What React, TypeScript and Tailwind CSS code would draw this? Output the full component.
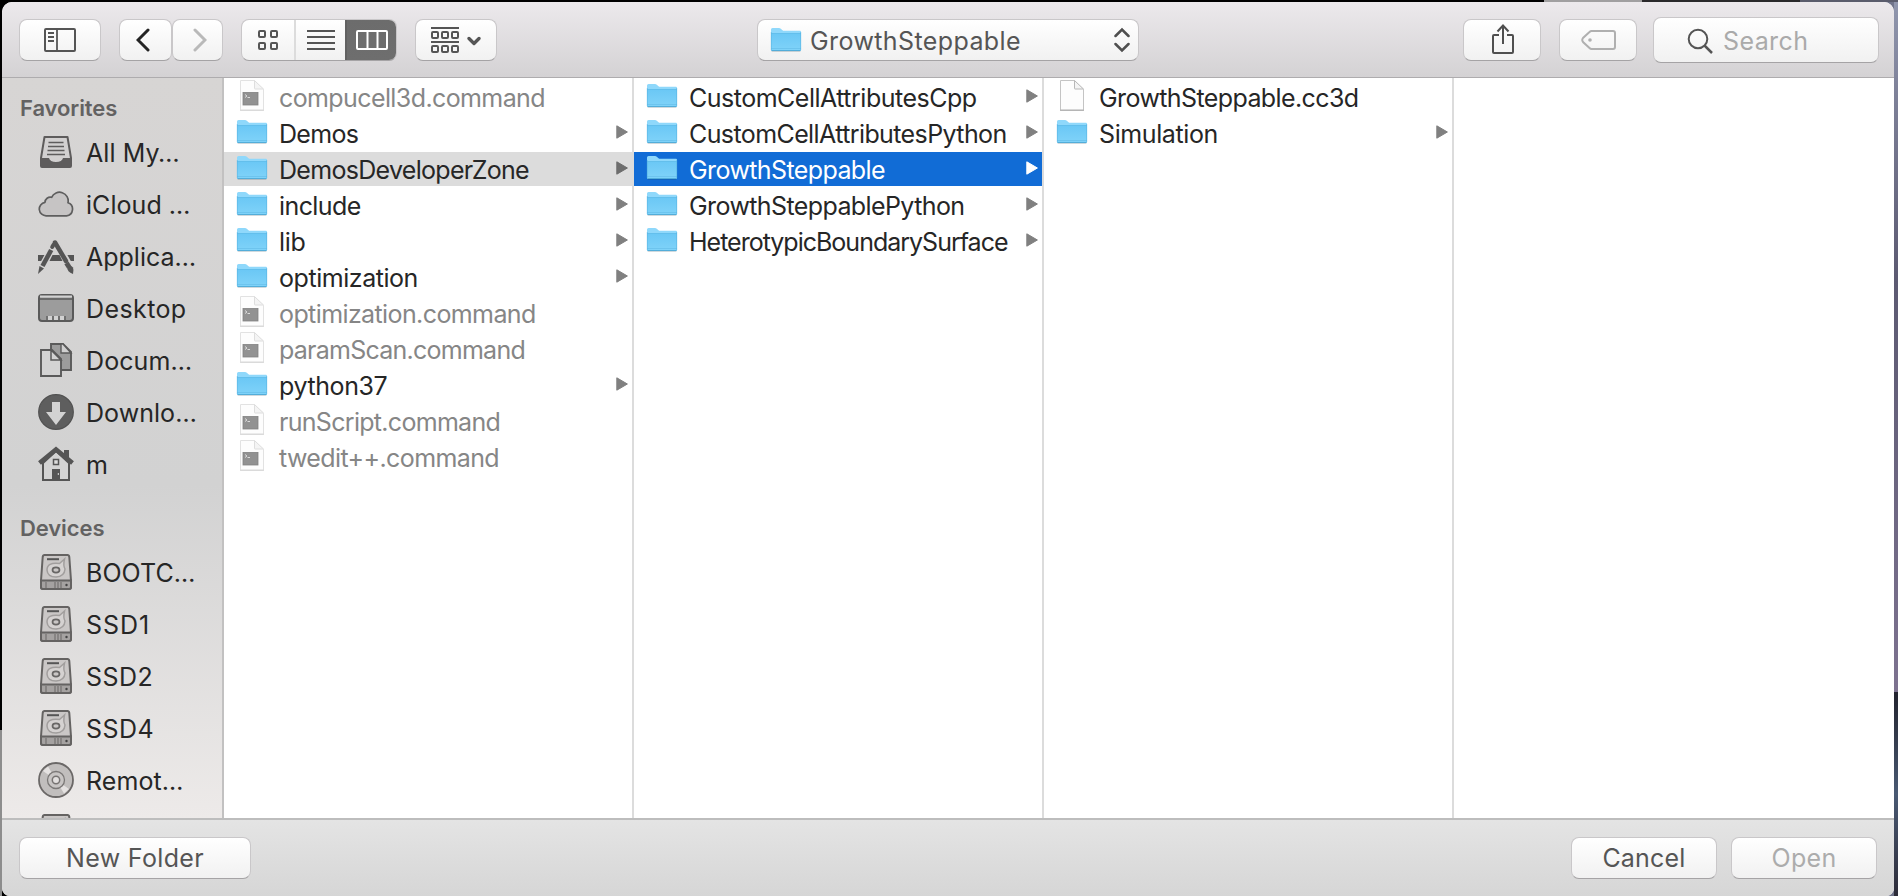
import type { ReactNode } from "react";

type Entry = {
  name: string;
  kind: "folder" | "command" | "file";
  state?: "trail" | "selected";
  tracking?: string;
};

const columns: Entry[][] = [
  [
    { name: "compucell3d.command", kind: "command" },
    { name: "Demos", kind: "folder", tracking: "tracking-[-0.7px]" },
    { name: "DemosDeveloperZone", kind: "folder", state: "trail", tracking: "tracking-[-0.7px]" },
    { name: "include", kind: "folder" },
    { name: "lib", kind: "folder", tracking: "tracking-[-0.3px]" },
    { name: "optimization", kind: "folder", tracking: "tracking-[-0.45px]" },
    { name: "optimization.command", kind: "command" },
    { name: "paramScan.command", kind: "command", tracking: "tracking-[-0.75px]" },
    { name: "python37", kind: "folder", tracking: "tracking-[-0.4px]" },
    { name: "runScript.command", kind: "command", tracking: "tracking-[-0.7px]" },
    { name: "twedit++.command", kind: "command" },
  ],
  [
    { name: "CustomCellAttributesCpp", kind: "folder", tracking: "tracking-[-0.5px]" },
    { name: "CustomCellAttributesPython", kind: "folder" },
    { name: "GrowthSteppable", kind: "folder", state: "selected" },
    { name: "GrowthSteppablePython", kind: "folder" },
    { name: "HeterotypicBoundarySurface", kind: "folder", tracking: "tracking-[-1px]" },
  ],
  [
    { name: "GrowthSteppable.cc3d", kind: "file" },
    { name: "Simulation", kind: "folder", tracking: "tracking-[-0.4px]" },
  ],
];

function FolderIcon() {
  return (
    <svg width="32" height="28" viewBox="0 0 32 28" className="block shrink-0">
      <defs>
        <linearGradient id="folderFront" x1="0" y1="0" x2="0" y2="1">
          <stop offset="0" stopColor="#6ac7f5" />
          <stop offset="1" stopColor="#80d3f9" />
        </linearGradient>
      </defs>
      <rect x="1.5" y="25" width="29" height="2" rx="1" fill="#000" opacity="0.13" />
      <path d="M1 4.500Q1 3 2.500 3H9Q10 3 10.800 3.700L12.500 5.200Q13.200 5.800 14.200 5.800H30Q31 5.800 31 7V25H1Z" fill="#8fd8fb" />
      <path d="M1 8H31V25Q31 26 30 26H2Q1 26 1 25Z" fill="url(#folderFront)" />
      <path d="M1 8.500H31M1 23.500H31" stroke="#5db8e4" strokeWidth="0.7" opacity="0.7" />
      <path d="M1.500 25.600H30.500" stroke="#4fa9d6" strokeWidth="1" />
      <path d="M1.300 7V25M30.700 7V25" stroke="#58b3e0" strokeWidth="0.6" />
    </svg>
  );
}

function PageIcon({ terminal }: { terminal: boolean }) {
  return (
    <svg width="32" height="34" viewBox="0 0 32 34" className="block shrink-0">
      <path d="M4.500 2.500H18.500L27.500 11.500V32H4.500Z" fill="#fdfdfd" stroke={terminal ? "#e2e2e2" : "#c4c4c4"} strokeWidth="1" />
      <path d="M4 32.300H28" stroke={terminal ? "#d5d5d5" : "#aaa"} strokeWidth="1" />
      <path d="M18.500 2.500V10.500Q18.500 11 19 11H27.500Z" fill="#f4f4f4" stroke={terminal ? "#dedede" : "#b8b8b8"} strokeWidth="1" />
      {terminal && (
        <>
          <rect x="7" y="14.500" width="15" height="12.500" fill="#929292" stroke="#828282" strokeWidth="0.8" />
          <path d="M9 16.500L11 18L9 19.500M11.500 19.500H14" stroke="#e3e3e3" strokeWidth="0.9" fill="none" />
        </>
      )}
    </svg>
  );
}

function Row({ entry }: { entry: Entry }) {
  const tone =
    entry.state === "selected"
      ? "bg-[#116cd6] text-white"
      : entry.state === "trail"
        ? "bg-[#dcdcdc] text-[#262626]"
        : entry.kind === "command"
          ? "text-[#868686]"
          : "text-[#262626]";
  const arrow = entry.state === "selected" ? "#ffffff" : entry.state === "trail" ? "#6d6d6d" : "#808080";
  return (
    <div className={`mb-0.5 flex h-[34px] items-center pr-1 pl-3 ${tone}`}>
      <div className="-mt-1 flex h-[34px] w-8 items-center">
        {entry.kind === "folder" ? <FolderIcon /> : <PageIcon terminal={entry.kind === "command"} />}
      </div>
      <span
        className={`ml-[11px] w-0 grow pt-px text-[25px] leading-[34px] font-[430] whitespace-nowrap ${entry.tracking ?? "tracking-[-0.6px]"}`}
      >
        {entry.name}
      </span>
      {entry.kind === "folder" && (
        <svg width="12" height="14" viewBox="0 0 12 14" className="-mt-[3px] shrink-0">
          <path d="M0.800 0.800L11.400 7L0.800 13.200Z" fill={arrow} stroke={arrow} strokeWidth="1" strokeLinejoin="round" />
        </svg>
      )}
    </div>
  );
}

function Button({ className, children }: { className: string; children: ReactNode }) {
  return (
    <div
      className={`flex shrink-0 items-center justify-center rounded-[8px] border border-[#c9c7c9] border-b-[#a5a3a5] bg-linear-to-b from-white to-[#f1f1f1] ${className}`}
    >
      {children}
    </div>
  );
}

const AllFiles = () => (
  <>
    <path d="M6.500 3H29.500L33 24V32Q33 33 32 33H4Q3 33 3 32V24Z" fill="#d2d0d0" stroke="#5e5c5c" strokeWidth="2" strokeLinejoin="round" />
    <path d="M3 24H11Q12 28 18 28Q24 28 25 24H33V32Q33 33 32 33H4Q3 33 3 32Z" fill="#5e5c5c" />
    <path d="M10.500 8.500H25.500M10 12.500H26M9.500 16.500H26.500M9 20.500H27" stroke="#5e5c5c" strokeWidth="1.700" />
  </>
);
const Cloud = () => (
  <path d="M8.500 29.800A6.800 6.800 0 0 1 7 16.300A5.300 5.300 0 0 1 13.600 11.300A8.700 8.700 0 0 1 30 16.800A6.700 6.700 0 0 1 28.500 29.800Z" fill="#c6c4c4" stroke="#5e5e5e" strokeWidth="1.700" strokeLinejoin="round" />
);
const Apps = () => (
  <g>
    <path d="M0 17H36V23H0Z" fill="#555" />
    <path d="M17.500 5L5 28M18 5L31 28" stroke="#d4d3d3" strokeWidth="8" />
    <path d="M14.500 17H21.500L24.500 23H11.500Z" fill="#555" />
    <path d="M17 4.500L28 23" stroke="#555" strokeWidth="4.500" strokeLinecap="round" />
    <path d="M28.500 25L31 29" stroke="#555" strokeWidth="5" />
    <path d="M29 29Q32 26 35 29.500Q36 32 35 36Q29 34 29 29Z" fill="#555" />
    <path d="M14.200 9L15.500 6.800" stroke="#555" strokeWidth="4" strokeLinecap="round" />
    <path d="M13.200 12L4.500 28" stroke="#555" strokeWidth="4.600" />
    <path d="M1.500 28L6 30.500L0 36Z" fill="#555" />
  </g>
);
const Desktop = () => (
  <>
    <rect x="1" y="5" width="34" height="26" rx="3" fill="#9c9c9c" stroke="#5a5a5a" strokeWidth="2" />
    <path d="M2 6.500H34" stroke="#d2d2d2" strokeWidth="2" />
    <path d="M1 9H35" stroke="#5a5a5a" strokeWidth="1.700" />
    <path d="M8 26H28V30H8Z" fill="#707070" />
    <path d="M10 26H14V30H10ZM16 26H20V30H16ZM22 26H26V30H22Z" fill="#d2d2d2" />
  </>
);
const Docs = () => (
  <g strokeWidth="1.900" stroke="#5a5a5a">
    <path d="M13 2H25L33 10V28H13Z" fill="#9c9c9c" />
    <path d="M23 2V11H33L25 2Z" fill="#d0d0d0" strokeWidth="1.400" />
    <path d="M3 8H14L23 17V34H3Z" fill="#d3d3d3" />
    <path d="M13 8V18H23Z" fill="#d3d3d3" strokeWidth="1.500" />
  </g>
);
const Down = () => (
  <>
    <circle cx="18" cy="18" r="17.300" fill="#5e5e5e" stroke="#515151" strokeWidth="1.200" />
    <path d="M14 8H22V18H28L18 31L8 18H14Z" fill="#d3d3d3" />
  </>
);
const Home = () => (
  <>
    <path d="M5 17L18 5L31 17V34H5Z" fill="#d3d3d3" stroke="#555" strokeWidth="2" />
    <path d="M26 4H31V12L26 8Z" fill="#555" />
    <path d="M1.500 17L18 3.500L34.500 17" stroke="#555" strokeWidth="4.500" fill="none" />
    <path d="M15.500 13.500H20.500V18.500H15.500Z" fill="#ddd" stroke="#555" strokeWidth="1.500" />
    <path d="M14 23H22V34H14Z" fill="#555" />
    <path d="M20.300 27V29" stroke="#ddd" strokeWidth="1" />
  </>
);
const Drive = () => (
  <>
    <path d="M6.500 1H29.500Q31 1 31.300 3L33 26.500V33Q33 35 31 35H5Q3 35 3 33V26.500L4.700 3Q5 1 6.500 1Z" fill="#cac7c6" stroke="#656362" strokeWidth="2" />
    <path d="M3 26.500H33V33Q33 35 31 35H5Q3 35 3 33Z" fill="#a5a2a1" stroke="#656362" strokeWidth="2" />
    <path d="M9 5.200H21" stroke="#555" strokeWidth="2" />
    <path d="M26.500 5L21.500 9.500Q9 8 9 16Q9.500 23 18 23Q26.500 22.500 27 15Q25 11.500 26.500 5Z" fill="#d5d2d1" stroke="#a19e9d" strokeWidth="1.500" />
    <ellipse cx="18" cy="16" rx="3.500" ry="2.600" fill="#c9c6c5" stroke="#686665" strokeWidth="1.700" />
    <path d="M8 28V34M17 28V34M20 28V34M23 28V34" stroke="#777574" strokeWidth="1.300" />
    <circle cx="28.500" cy="31" r="1.200" fill="#444" />
  </>
);
const Disc = () => (
  <>
    <circle cx="18" cy="18" r="17" fill="#c1bebd" stroke="#6b6867" strokeWidth="1.800" />
    <path d="M18 18L5 9L10 4.500ZM18 18L31 27L26 31.500Z" fill="#e5e2e1" />
    <circle cx="18" cy="18" r="8.500" fill="#c8c5c4" stroke="#7b7877" strokeWidth="1.300" />
    <circle cx="18" cy="18" r="3.700" fill="#e2dfde" stroke="#777473" strokeWidth="1.500" />
  </>
);

type Place = { label: string; Glyph: () => ReactNode; tracking: string };

const favorites: Place[] = [
  { label: "All My…", Glyph: AllFiles, tracking: "tracking-[0.1px]" },
  { label: "iCloud …", Glyph: Cloud, tracking: "tracking-[0.05px]" },
  { label: "Applica…", Glyph: Apps, tracking: "tracking-[0px]" },
  { label: "Desktop", Glyph: Desktop, tracking: "tracking-[0.4px]" },
  { label: "Docum…", Glyph: Docs, tracking: "tracking-[0.1px]" },
  { label: "Downlo…", Glyph: Down, tracking: "tracking-[0.05px]" },
  { label: "m", Glyph: Home, tracking: "tracking-[0px]" },
];
const devices: Place[] = [
  { label: "BOOTC…", Glyph: Drive, tracking: "tracking-[0.05px]" },
  { label: "SSD1", Glyph: Drive, tracking: "tracking-[1px]" },
  { label: "SSD2", Glyph: Drive, tracking: "tracking-[0.5px]" },
  { label: "SSD4", Glyph: Drive, tracking: "tracking-[0.5px]" },
  { label: "Remot…", Glyph: Disc, tracking: "tracking-[0.1px]" },
  { label: "", Glyph: Drive, tracking: "tracking-[0px]" },
];

function SidebarList({ items }: { items: Place[] }) {
  return (
    <>
      {items.map(({ label, Glyph, tracking }, i) => (
        <div key={i} className="flex h-[52px] shrink-0 items-center pl-9">
          <svg width="36" height="36" viewBox="0 0 36 36" className="shrink-0">
            <Glyph />
          </svg>
          <span className={`ml-3 pt-0.5 text-[25px] leading-[50px] font-[430] whitespace-nowrap text-[#262626] ${tracking}`}>
            {label}
          </span>
        </div>
      ))}
    </>
  );
}

export default function App() {
  return (
    <div className="flex h-[896px] w-[1898px] flex-col overflow-hidden bg-black font-['Inter','Liberation_Sans',sans-serif]">
      <div className="flex h-0.5 shrink-0">
        <div className="w-[1544px] bg-black" />
        <div className="w-[98px] bg-[#a09fa0]" />
        <div className="w-[158px] bg-[#2a292b]" />
        <div className="grow bg-[#5a5c6c]" />
      </div>
      <div className="flex h-[894px] bg-linear-to-r from-black from-50% to-[#70748a] to-50%">
        <div className="flex w-0.5 shrink-0 flex-col">
          <div className="h-[728px] bg-black" />
          <div className="grow bg-[#8d8d8d]" />
        </div>
        <div className="flex w-[1892px] shrink-0 flex-col overflow-hidden rounded-t-[10px] rounded-b-[8px] bg-white">
          <header className="flex h-[76px] shrink-0 border-b border-[#aeacae] bg-linear-to-b from-[#ece9ec] to-[#d4d2d4] pt-[17px] pl-[17px]">
            <Button className="h-[42px] w-[82px]">
              <svg width="32" height="24" viewBox="0 0 32 24" fill="none" stroke="#555" strokeWidth="2">
                <rect x="1" y="1" width="30" height="22" rx="1" />
                <path d="M13 1V23M4 5H10M4 9H10M4 13H10" strokeWidth="1.800" />
              </svg>
            </Button>
            <Button className="ml-[18px] h-[42px] w-[53px]">
              <svg width="14" height="26" viewBox="0 0 14 26" className="-ml-[5px]" fill="none" stroke="#242424" strokeWidth="3" strokeLinecap="round">
                <path d="M12 3L2 13L12 23" />
              </svg>
            </Button>
            <Button className="h-[42px] w-[51px]">
              <svg width="14" height="26" viewBox="0 0 14 26" className="ml-1" fill="none" stroke="#b9b9b9" strokeWidth="3" strokeLinecap="round">
                <path d="M2 3L12 13L2 23" />
              </svg>
            </Button>
            <Button className="ml-[18px] h-[42px] w-[156px] justify-start! overflow-hidden">
              <div className="flex h-full w-[54px] shrink-0 items-center justify-center border-r-2 border-[#dcdcdc]">
                <svg width="20" height="20" viewBox="0 0 20 20" fill="none" stroke="#555" strokeWidth="2">
                  <rect x="1" y="1" width="6" height="6" rx="1" />
                  <rect x="13" y="1" width="6" height="6" rx="1" />
                  <rect x="1" y="13" width="6" height="6" rx="1" />
                  <rect x="13" y="13" width="6" height="6" rx="1" />
                </svg>
              </div>
              <div className="flex h-full w-[49px] shrink-0 items-center justify-center">
                <svg width="28" height="20" viewBox="0 0 28 20" stroke="#555" strokeWidth="2">
                  <path d="M0 1H28M0 7H28M0 13H28M0 19H28" />
                </svg>
              </div>
              <div className="-my-px flex h-[42px] w-[52px] shrink-0 items-center justify-center border-l-2 border-[#626262] bg-linear-to-b from-[#6c6c6c] to-[#6e6e6e]">
                <svg width="32" height="20" viewBox="0 0 32 20" fill="none" stroke="#fff" strokeWidth="2">
                  <rect x="1" y="1" width="30" height="18" rx="1" />
                  <path d="M11.500 1V19M21.500 1V19" />
                </svg>
              </div>
            </Button>
            <Button className="ml-[18px] h-[42px] w-[82px]">
              <svg width="50" height="26" viewBox="0 0 50 26" fill="none" stroke="#555" strokeWidth="2">
                <path d="M0 1H28M0 15H28" />
                {[1, 11, 21].map((x) => (
                  <g key={x}>
                    <rect x={x} y="5" width="6" height="6" rx="1" />
                    <rect x={x} y="19" width="6" height="6" rx="1" />
                  </g>
                ))}
                <path d="M38 11.500L43 16.500L48 11.500" strokeWidth="3.300" strokeLinecap="round" strokeLinejoin="round" />
              </svg>
            </Button>
            <Button className="ml-[260px] h-[42px] w-[382px] px-2">
              <div className="-mt-0.5 ml-1">
                <FolderIcon />
              </div>
              <span className="ml-2 grow pt-px text-[25px] leading-10 tracking-[0.4px] text-[#555]">GrowthSteppable</span>
              <svg width="16" height="26" viewBox="0 0 16 26" fill="none" stroke="#4f4f4f" strokeWidth="2.500" strokeLinecap="round" strokeLinejoin="miter">
                <path d="M1.500 9L8 2.500L14.500 9M1.500 17L8 23.500L14.500 17" />
              </svg>
            </Button>
            <Button className="ml-[324px] h-[42px] w-[78px]">
              <svg width="24" height="32" viewBox="0 0 24 32" fill="none" stroke="#4f4f4f" strokeWidth="2" className="-mt-0.5 ml-px">
                <path d="M8 12H3Q2 12 2 13V29Q2 30 3 30H21Q22 30 22 29V13Q22 12 21 12H16M12 21V3M6.500 8.500L12 2.500L17.500 8.500" />
              </svg>
            </Button>
            <Button className="ml-[18px] h-[42px] w-[78px]">
              <svg width="36" height="22" viewBox="0 0 36 22" fill="none" stroke="#b0b0b0" strokeWidth="2" className="ml-0.5">
                <path d="M10.500 2H32Q34 2 34 4V18Q34 20 32 20H10.500Q9.500 20 8.500 19L2 13Q0.500 11 2 9L8.500 3Q9.500 2 10.500 2Z" />
                <circle cx="9" cy="11" r="1.800" fill="#b0b0b0" stroke="none" />
              </svg>
            </Button>
            <Button className="-mt-[2px] ml-4 h-[46px] w-[226px] justify-start! pl-[33px]">
              <svg width="26" height="26" viewBox="0 0 26 26" fill="none" stroke="#555" strokeWidth="2" className="mt-px">
                <circle cx="11" cy="11" r="9.300" />
                <path d="M17.500 17.500L25 25" strokeWidth="2.500" />
              </svg>
              <span className="ml-[10px] pt-px text-[25px] leading-10 tracking-[0.4px] text-[#aaa]">Search</span>
            </Button>
          </header>

          <main className="flex h-[740px] shrink-0">
            <aside className="flex w-[222px] shrink-0 flex-col overflow-hidden border-r-2 border-[#c2c1c1] bg-linear-to-b from-[#d7d5d4] via-[#d2d2d2] via-55% to-[#edeae9]">
              <h2 className="h-12 shrink-0 pt-[14px] pl-[18px] text-[22px] leading-8 font-semibold tracking-[-0.1px] text-[#636262]">
                Favorites
              </h2>
              <SidebarList items={favorites} />
              <h2 className="h-14 shrink-0 pt-[22px] pl-[18px] text-[22px] leading-8 font-semibold tracking-[-0.1px] text-[#636262]">
                Devices
              </h2>
              <SidebarList items={devices} />
            </aside>
            {columns.map((entries, i) => (
              <section key={i} className="w-[410px] shrink-0 border-r-2 border-[#dcdcdc] pt-0.5">
                {entries.map((entry) => (
                  <Row key={entry.name} entry={entry} />
                ))}
              </section>
            ))}
          </main>

          <footer className="flex h-[78px] shrink-0 border-t-2 border-[#bdbdbd] bg-linear-to-b from-[#e4e4e4] to-[#d6d6d6] pt-[17px] pl-[17px] text-[25px] text-[#555]">
            <Button className="h-[42px] w-[232px] pt-0.5 tracking-[0.35px]">New Folder</Button>
            <Button className="ml-[1320px] h-[42px] w-[146px] pt-0.5 tracking-[0.2px]">Cancel</Button>
            <Button className="ml-[14px] h-[42px] w-[146px] pt-0.5 tracking-[0.3px] text-[#acacac]">Open</Button>
          </footer>
        </div>
        <div className="flex w-1 shrink-0 flex-col">
          <div className="h-[690px] bg-linear-to-b from-[#9096ad] via-[#5c5a72] via-40% to-[#7d7290]" />
          <div className="grow bg-linear-to-b from-[#23242f] via-[#4a5a74] to-[#2c2b38]" />
        </div>
      </div>
    </div>
  );
}
